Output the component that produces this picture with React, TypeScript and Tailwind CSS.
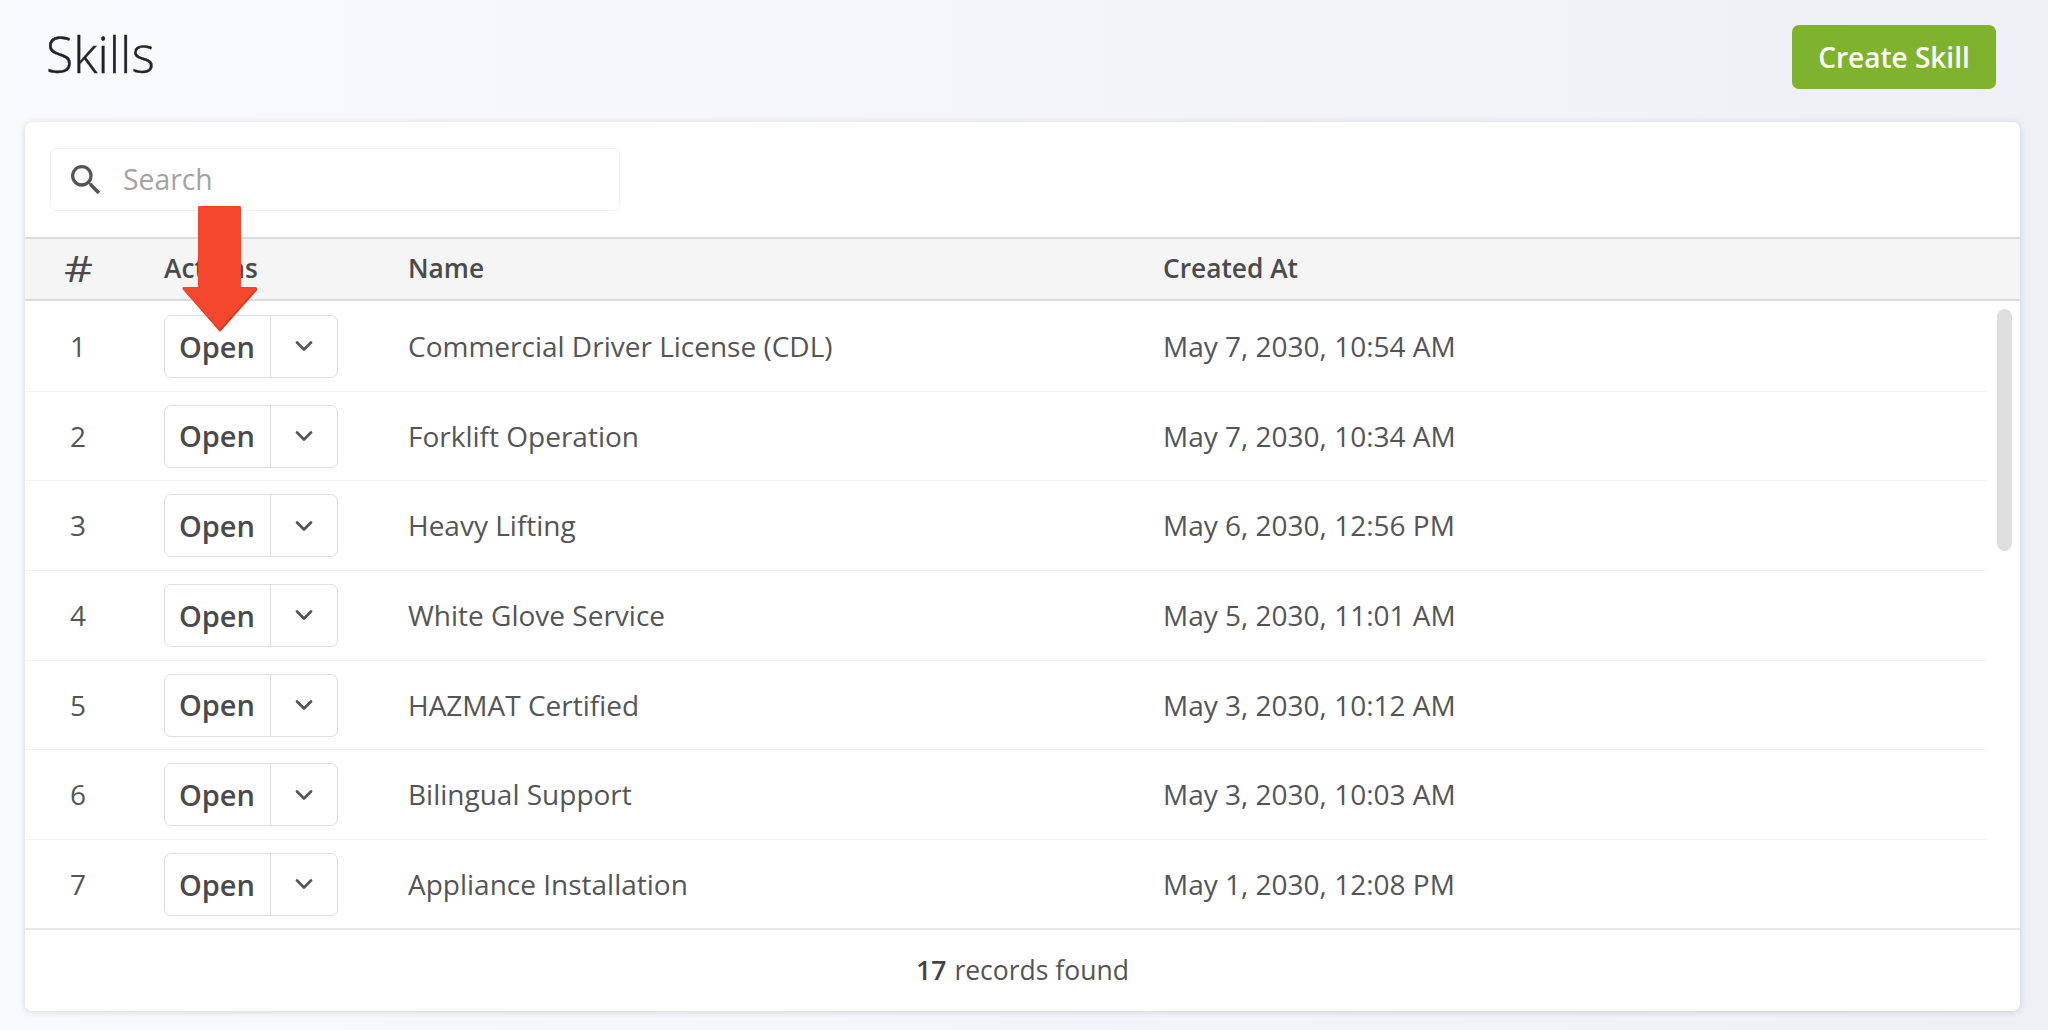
import { ChevronDown } from "lucide-react";

const skills = [
  { id: 1, name: "Commercial Driver License (CDL)", createdAt: "May 7, 2030, 10:54 AM" },
  { id: 2, name: "Forklift Operation", createdAt: "May 7, 2030, 10:34 AM" },
  { id: 3, name: "Heavy Lifting", createdAt: "May 6, 2030, 12:56 PM" },
  { id: 4, name: "White Glove Service", createdAt: "May 5, 2030, 11:01 AM" },
  { id: 5, name: "HAZMAT Certified", createdAt: "May 3, 2030, 10:12 AM" },
  { id: 6, name: "Bilingual Support", createdAt: "May 3, 2030, 10:03 AM" },
  { id: 7, name: "Appliance Installation", createdAt: "May 1, 2030, 12:08 PM" },
];

export default function App() {
  return (
    <div className="relative h-[1030px] w-[2048px] overflow-hidden bg-gradient-to-r from-[#f9fafc] to-[#eef0f6] font-['Open_Sans',sans-serif] text-[#555]">
      {/* ヘッダー */}
      <div className="flex h-[122px] items-start justify-between pl-[46px] pr-[52px] pt-[24px]">
        <h1 className="text-[50px] font-light leading-[60px] text-[#1f2328] [-webkit-text-stroke:0.4px_#1f2328]">Skills</h1>
        <button className="mt-[1px] flex h-[64px] w-[204px] items-center justify-center rounded-[7px] bg-[#7fb32e] text-[28px] font-semibold text-white">
          Create Skill
        </button>
      </div>

      {/* テーブル */}
      <div className="ml-[25px] h-[889px] w-[1995px] overflow-hidden rounded-[7px] bg-white shadow-[0_1px_6px_rgba(40,50,80,0.18)]">
        <div className="h-[115px] pl-[25px] pt-[26px]">
          <div className="flex h-[63px] w-[570px] items-center rounded-[7px] border border-[#f0f0f0] pl-[15px]">
            <svg className="h-[40px] w-[40px] text-[#555]" viewBox="0 0 24 24" fill="currentColor">
              <path d="M15.5 14h-.79l-.28-.27A6.471 6.471 0 0 0 16 9.5 6.5 6.5 0 1 0 9.5 16c1.61 0 3.09-.59 4.23-1.57l.27.28v.79l5 4.99L20.49 19l-4.99-5zm-6 0C7.01 14 5 11.99 5 9.5S7.01 5 9.5 5 14 7.01 14 9.5 11.99 14 9.5 14z" />
            </svg>
            <span className="ml-[17px] pb-[1px] text-[28.3px] text-[#a3a3a3]">Search</span>
          </div>
        </div>

        <div className="grid h-[64px] grid-cols-[139px_244px_755px_1fr] items-center border-y-2 border-[#dcdcdc] bg-[#f5f5f5] text-[26.3px] font-semibold text-[#4a4a4a]">
          <span className="pr-[32px] text-center">
            <span className="inline-block scale-x-125 text-[36px] font-normal">#</span>
          </span>
          <span>Actions</span>
          <span>Name</span>
          <span>Created At</span>
        </div>

        <div className="relative h-[627px] overflow-hidden pt-[1px]">
          {skills.map((skill) => (
            <div
              key={skill.id}
              className="grid h-[89.7px] w-[1962px] grid-cols-[139px_244px_755px_1fr] items-center border-b border-[#f3f3f3] text-[28px]"
            >
              <span className="pb-[1px] pr-[33px] text-center">{skill.id}</span>
              <div className="flex h-[63px] w-[174px] items-center rounded-[7px] border border-[#dedede] bg-white">
                <span className="flex h-full w-[106px] items-center justify-center border-r border-[#dedede] pr-[1px] text-[29px] font-semibold text-[#4a4a4a]">
                  Open
                </span>
                <span className="flex flex-1 items-center justify-center">
                  <ChevronDown className="h-[28px] w-[28px] text-[#555]" strokeWidth={2.4} />
                </span>
              </div>
              <span className="pb-[1px]">{skill.name}</span>
              <span className="pb-[1px]">{skill.createdAt}</span>
            </div>
          ))}
          {/* スクロールバー */}
          <div className="absolute left-[1972px] top-[8px] h-[242px] w-[15px] rounded-full bg-[#dfdfdf]" />
        </div>

        <div className="flex h-[83px] items-center justify-center border-t-2 border-[#e8e8e8] text-[26.5px]">
          <span className="font-semibold text-[#444]">17</span>
          <span className="ml-[8px]">records found</span>
        </div>
      </div>

      {/* 注釈の矢印 */}
      <svg className="absolute left-[180px] top-[204px]" width="80" height="130" viewBox="0 0 80 130">
        <path d="M18 4a2 2 0 0 1 2-2h39a2 2 0 0 1 2 2v79h14c2 0 3 2 1.5 4L40 128 3 85.5Q2 83 4 83h14z" fill="#d83b23" />
        <path d="M18 4a2 2 0 0 1 2-2h39a2 2 0 0 1 2 2v79h13.5c1.5 0 2 1 1 2.500L39.500 125.500 3 85.500Q2 83 4 83h14z" fill="#f4472c" />
      </svg>
    </div>
  );
}
